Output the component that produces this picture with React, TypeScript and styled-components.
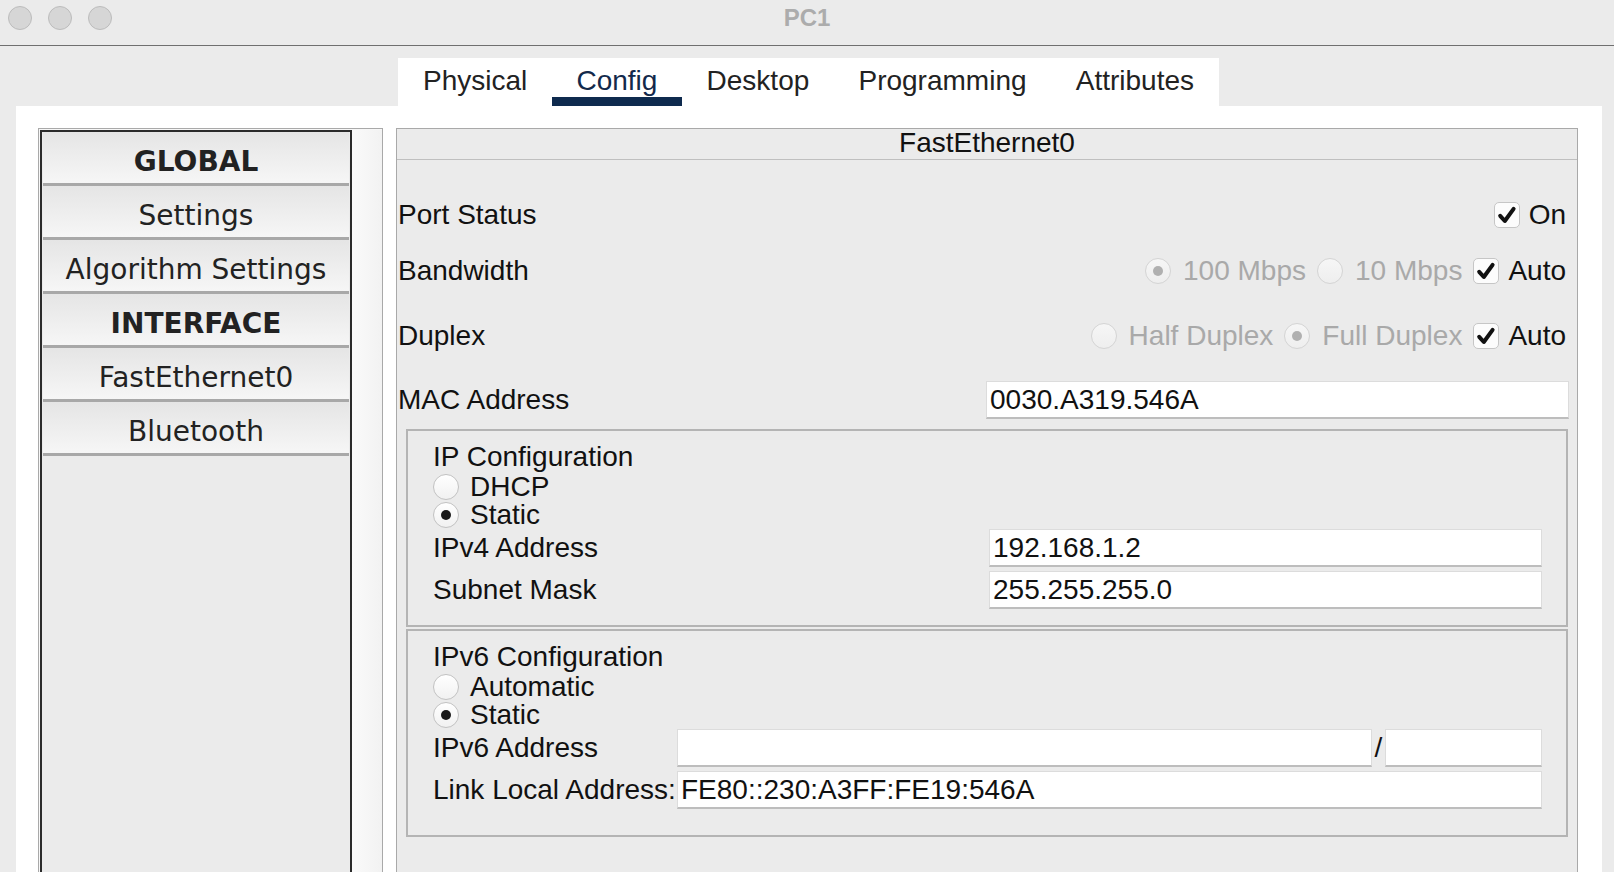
import styled, { createGlobalStyle } from 'styled-components';

const GlobalStyle = createGlobalStyle`
  html, body {
    margin: 0;
    height: 100%;
  }
  body {
    background: #ebebeb;
    font-family: "Liberation Sans", Arial, sans-serif;
    color: #111;
    overflow: hidden;
  }
  #root {
    height: 100%;
  }
`;

const Window = styled.div`
  height: 100vh;
  display: flex;
  flex-direction: column;
  background: #ebebeb;
`;

const TitleBar = styled.header`
  flex: none;
  height: 35px;
  padding-bottom: 10px;
  border-bottom: 1px solid #6f6f6f;
  display: grid;
  grid-template-columns: 1fr auto 1fr;
  align-items: center;
`;

const Lights = styled.div`
  display: flex;
  gap: 16px;
  padding-left: 8px;
`;

const Light = styled.span`
  width: 24px;
  height: 24px;
  box-sizing: border-box;
  border-radius: 50%;
  background: #d6d6d6;
  border: 1px solid #bcbcbc;
`;

const Title = styled.div`
  font-weight: bold;
  font-size: 24px;
  line-height: 24px;
  color: #acacac;
`;

const TabStrip = styled.nav`
  flex: none;
  align-self: center;
  margin: 12px 0 0 3px;
  height: 48px;
  display: flex;
  background: #fff;
`;

const Tab = styled.div<{ $active?: boolean }>`
  padding: 0 24.6px;
  font-size: 28px;
  line-height: 46px;
  color: ${(p) => (p.$active ? '#13294b' : '#222')};
  box-shadow: ${(p) => (p.$active ? 'inset 0 -9px 0 #0e2a4e' : 'none')};
`;

const Sheet = styled.main`
  flex: 1;
  min-height: 0;
  margin: 0 12px 0 16px;
  background: #fff;
  padding: 22px 24px 0 22px;
  display: grid;
  grid-template-columns: 345px 1fr;
  gap: 13px;
  overflow: hidden;
`;

const Sidebar = styled.aside`
  border: 1px solid #a9a9a9;
  border-bottom: none;
  background: #f7f7f7;
  padding: 1px 0 0 1px;
  display: flex;
`;

const List = styled.div`
  width: 312px;
  box-sizing: border-box;
  border: 2px solid #2b2b2b;
  border-bottom: none;
  background: #ebebeb;
  padding: 0 1px;
`;

const ListItem = styled.div<{ $heading?: boolean }>`
  box-sizing: border-box;
  height: 54px;
  padding-top: 7px;
  border-bottom: 3px solid #a8a8a8;
  background: linear-gradient(#e5e5e5, #f6f6f6);
  font-family: "DejaVu Sans", Verdana, sans-serif;
  font-size: 28px;
  font-weight: ${(p) => (p.$heading ? 'bold' : 'normal')};
  color: #222;
  display: flex;
  align-items: center;
  justify-content: center;
`;

const Track = styled.div`
  flex: 1;
  background: linear-gradient(90deg, #fafafa, #f2f2f2);
`;

const Panel = styled.section`
  min-width: 0;
  border: 1px solid #a9a9a9;
  border-bottom: none;
  background: #ebebeb;
  display: flex;
  flex-direction: column;
`;

const PanelHeader = styled.div`
  height: 30px;
  line-height: 27px;
  text-align: center;
  font-size: 28px;
  border-bottom: 1px solid #bfbfbf;
`;

const PanelBody = styled.div`
  padding: 0 8px 0 1px;
  display: flex;
  flex-direction: column;
`;

const Row = styled.div<{ $mt: number }>`
  margin-top: ${(p) => p.$mt}px;
  height: 40px;
  display: flex;
  align-items: center;
  justify-content: space-between;
  font-size: 28px;
`;

const FieldRow = styled.div<{ $mt?: number; $label: number }>`
  margin-top: ${(p) => p.$mt ?? 0}px;
  height: 38px;
  display: grid;
  grid-template-columns: ${(p) => p.$label}px 1fr;
  align-items: center;
  font-size: 28px;
  white-space: nowrap;
`;

const AddressRow = styled(FieldRow)`
  grid-template-columns: ${(p) => p.$label}px 1fr 13px 157px;
`;

const Slash = styled.span`
  text-align: center;
`;

const Options = styled.div`
  display: flex;
  align-items: center;
  gap: 11px;
  padding-right: 3px;
`;

const Option = styled.label<{ $disabled?: boolean; $gap?: number }>`
  display: inline-flex;
  align-items: center;
  gap: ${(p) => p.$gap ?? 12}px;
  color: ${(p) => (p.$disabled ? '#a9a9a9' : '#111')};
`;

const Box = styled.span`
  width: 26px;
  height: 26px;
  box-sizing: border-box;
  border: 1px solid #c6c6c6;
  border-radius: 5px;
  background: #fcfcfc;
  display: inline-flex;
  align-items: center;
  justify-content: center;
`;

const Radio = styled.span<{ $checked?: boolean; $disabled?: boolean }>`
  width: 26px;
  height: 26px;
  flex: none;
  box-sizing: border-box;
  border-radius: 50%;
  border: 1px solid ${(p) => (p.$disabled ? '#d4d4d4' : '#c2c2c2')};
  background: ${(p) => (p.$disabled ? 'linear-gradient(#f6f6f6, #eeeeee)' : 'linear-gradient(#ffffff, #f1f1f1)')};
  display: inline-flex;
  align-items: center;
  justify-content: center;

  &::after {
    content: '';
    width: 10px;
    height: 10px;
    border-radius: 50%;
    background: ${(p) => (p.$disabled ? '#b0b0b0' : '#1a1a1a')};
    display: ${(p) => (p.$checked ? 'block' : 'none')};
  }
`;

const TextBox = styled.input`
  box-sizing: border-box;
  height: 38px;
  width: 100%;
  margin: 0;
  padding: 0 3px;
  border: 1px solid #dcdcdc;
  border-bottom: 2px solid #bdbdbd;
  border-radius: 0;
  background: #fff;
  font-family: "Liberation Sans", Arial, sans-serif;
  font-size: 28px;
  color: #111;
  outline: none;
`;

const Group = styled.fieldset<{ $mt: number; $pb: number }>`
  margin: ${(p) => p.$mt}px 1px 0 8px;
  padding: 10px 24px ${(p) => p.$pb}px 25px;
  border: 2px solid #b4b4b4;
  min-width: 0;
  font-size: 28px;
`;

const GroupTitle = styled.div`
  line-height: 32px;
`;

const RadioRow = styled.label`
  height: 28px;
  display: flex;
  align-items: center;
  gap: 11px;
`;

const Check = () => (
  <Box>
    <svg width="22" height="22" viewBox="0 0 22 22">
      <path d="M4.2 11.8 L8.8 17 L17.6 4.8" fill="none" stroke="#111" strokeWidth="4" strokeLinecap="round" strokeLinejoin="round" />
    </svg>
  </Box>
);

const tabs = ['Physical', 'Config', 'Desktop', 'Programming', 'Attributes'];
const items: [string, boolean][] = [
  ['GLOBAL', true],
  ['Settings', false],
  ['Algorithm Settings', false],
  ['INTERFACE', true],
  ['FastEthernet0', false],
  ['Bluetooth', false],
];

export default () => (
  <Window>
    <GlobalStyle />
    <TitleBar>
      <Lights>
        <Light />
        <Light />
        <Light />
      </Lights>
      <Title>PC1</Title>
      <div />
    </TitleBar>
    <TabStrip>
      {tabs.map((t) => (
        <Tab key={t} $active={t === 'Config'}>{t}</Tab>
      ))}
    </TabStrip>
    <Sheet>
      <Sidebar>
        <List>
          {items.map(([label, heading]) => (
            <ListItem key={label} $heading={heading}>{label}</ListItem>
          ))}
        </List>
        <Track />
      </Sidebar>
      <Panel>
        <PanelHeader>FastEthernet0</PanelHeader>
        <PanelBody>
          <Row $mt={35}>
            <span>Port Status</span>
            <Options>
              <Option $gap={9}><Check />On</Option>
            </Options>
          </Row>
          <Row $mt={16}>
            <span>Bandwidth</span>
            <Options>
              <Option $disabled><Radio $checked $disabled />100 Mbps</Option>
              <Option $disabled><Radio $disabled />10 Mbps</Option>
              <Option $gap={9}><Check />Auto</Option>
            </Options>
          </Row>
          <Row $mt={25}>
            <span>Duplex</span>
            <Options>
              <Option $disabled><Radio $disabled />Half Duplex</Option>
              <Option $disabled><Radio $checked $disabled />Full Duplex</Option>
              <Option $gap={9}><Check />Auto</Option>
            </Options>
          </Row>
          <FieldRow $mt={25} $label={588}>
            <span>MAC Address</span>
            <TextBox readOnly defaultValue="0030.A319.546A" />
          </FieldRow>
          <Group $mt={10} $pb={16}>
            <GroupTitle>IP Configuration</GroupTitle>
            <RadioRow><Radio />DHCP</RadioRow>
            <RadioRow><Radio $checked />Static</RadioRow>
            <FieldRow $label={556}>
              <span>IPv4 Address</span>
              <TextBox readOnly defaultValue="192.168.1.2" />
            </FieldRow>
            <FieldRow $mt={4} $label={556}>
              <span>Subnet Mask</span>
              <TextBox readOnly defaultValue="255.255.255.0" />
            </FieldRow>
          </Group>
          <Group $mt={2} $pb={26}>
            <GroupTitle>IPv6 Configuration</GroupTitle>
            <RadioRow><Radio />Automatic</RadioRow>
            <RadioRow><Radio $checked />Static</RadioRow>
            <AddressRow $label={244}>
              <span>IPv6 Address</span>
              <TextBox readOnly defaultValue="" />
              <Slash>/</Slash>
              <TextBox readOnly defaultValue="" />
            </AddressRow>
            <FieldRow $mt={4} $label={244}>
              <span>Link Local Address:</span>
              <TextBox readOnly defaultValue="FE80::230:A3FF:FE19:546A" />
            </FieldRow>
          </Group>
        </PanelBody>
      </Panel>
    </Sheet>
  </Window>
);
